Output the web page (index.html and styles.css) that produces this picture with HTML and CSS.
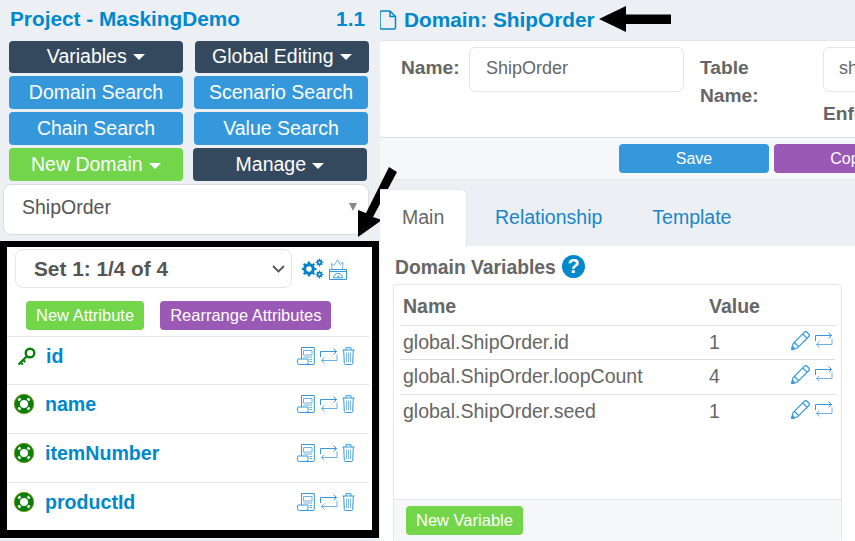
FILE: index.html
```html
<!DOCTYPE html>
<html lang="en">
<head>
<meta charset="utf-8">
<title>Domain: ShipOrder</title>
<link rel="stylesheet" href="styles.css">
</head>
<body>
<svg class="defs" width="0" height="0" aria-hidden="true">
  <defs>
    <symbol id="i-doc" viewBox="0 0 18 18"><path d="M4.500 12V.5h12.800v15.800a1.200 1.200 0 0 1-1.200 1.200H2.500a2 2 0 0 1-2-2V13a1 1 0 0 1 1-1h9.500v3.500a2 2 0 0 1-2 2" fill="none" stroke="#3498db"/><path d="M6.500 3.500h8.500v4.500H6.500zM6.500 10h8.500M12.500 12.500h2.500M12.500 14.500h2.500" fill="none" stroke="#6db1e4"/></symbol>
    <symbol id="i-loop" viewBox="0 0 18 16"><path d="M.5 9V3.500h16M13.500.7l3.200 2.800-3.200 2.800" fill="none" stroke="#3498db"/><path d="M17 6.500v6H1.500M4.500 9.700l-3.200 2.800 3.200 2.800" fill="none" stroke="#6db1e4"/></symbol>
    <symbol id="i-trash" viewBox="0 0 13 18"><path d="M.5 3h12M4 3V.7h5V3M1.700 3l.6 13.300a1.200 1.200 0 0 0 1.200 1.200h6a1.200 1.200 0 0 0 1.200-1.200L11.300 3" fill="none" stroke="#3498db"/><path d="M4.500 5.500v9.500M6.500 5.500v9.500M8.500 5.500v9.500" fill="none" stroke="#7dbbe8"/></symbol>
    <symbol id="i-pencil" viewBox="0 0 19 19"><path d="M13.500 1.200a1.800 1.800 0 0 1 2.500 0l1.800 1.800a1.800 1.800 0 0 1 0 2.500L6.500 16.800 2.600 18.400a1 1 0 0 1-1.800-1.300L2.200 12.500zM11.800 3l4.200 4.200M3.500 11.500l4 4" fill="none" stroke="#3498db" stroke-width="1.200"/><path d="M.8 18.300l2.300-2.300" stroke="#3498db" stroke-width="2"/></symbol>
    <symbol id="i-buoy" viewBox="0 0 20 20"><circle cx="10" cy="10" r="7" fill="none" stroke="#0a7d0a" stroke-width="6"/><path d="M6.200 6.200L4.600 4.600M13.800 6.200l1.600-1.600M6.200 13.800l-1.600 1.600M13.800 13.800l1.600 1.600" stroke="#fff" stroke-width="3"/><circle cx="10" cy="10" r="9.700" fill="none" stroke="#9aa81e" stroke-width=".6"/></symbol>
    <symbol id="i-key" viewBox="0 0 19 19"><circle cx="13" cy="6" r="4.300" fill="none" stroke="#0a7d0a" stroke-width="2.400"/><path d="M9.800 9.200L1.500 17.500M3.500 15.500l2.500 2M6 13l2.300 2" fill="none" stroke="#0a7d0a" stroke-width="2.200"/></symbol>
    <symbol id="i-gears" viewBox="0 0 22 21"><g fill="none" stroke="#0a82c8"><circle cx="7" cy="11" r="4.300" stroke-width="3.200"/><path d="M7 3.500v15M-.5 11h15M1.700 5.700l10.600 10.600M12.300 5.700L1.700 16.300" stroke-width="2.200" stroke-dasharray="2.400 10.200"/><circle cx="17.500" cy="4.500" r="1.900" stroke-width="1.800"/><path d="M17.500.6v7.800M13.600 4.500h7.800M14.800 1.800l5.400 5.400M20.200 1.800l-5.400 5.400" stroke-width="1.200" stroke-dasharray="1.300 5.200"/><circle cx="17.500" cy="16.500" r="1.900" stroke-width="1.800"/><path d="M17.500 12.600v7.800M13.600 16.500h7.800M14.800 13.800l5.400 5.400M20.200 13.800l-5.400 5.400" stroke-width="1.200" stroke-dasharray="1.300 5.200"/></g></symbol>
    <symbol id="i-gauge" viewBox="0 0 18 21"><path d="M3 10L2.500 4.500l2.500 2L8.500.8l2.500 4.700 3-2.500-.5 7" fill="none" stroke="#74b6e6"/><g fill="none" stroke="#3498db"><path d="M.5 10.500h17v10h-17zM.5 12.500h17"/><path d="M4.500 18.800a4.500 4.500 0 0 1 9 0zM9 18.800l.8-2.500"/></g></symbol>
    <symbol id="i-page" viewBox="0 0 18 20"><path d="M1 2.500A1.500 1.500 0 0 1 2.500 1H11l5.500 5.500V17.500A1.500 1.500 0 0 1 15 19H2.500A1.500 1.500 0 0 1 1 17.500zM11 1v5.500h5.500" fill="none" stroke="#0088cc" stroke-width="1.500"/></symbol>
  </defs>
</svg>

<div class="page">
  <aside class="side">
    <div class="title-row"><span>Project - MaskingDemo</span><span>1.1</span></div>
    <div class="btn-row row-a">
      <a class="btn dark">Variables <i class="caret"></i></a>
      <a class="btn dark">Global Editing <i class="caret"></i></a>
    </div>
    <div class="btn-row row-b">
      <a class="btn blue">Domain Search</a>
      <a class="btn blue">Scenario Search</a>
    </div>
    <div class="btn-row row-b">
      <a class="btn blue">Chain Search</a>
      <a class="btn blue">Value Search</a>
    </div>
    <div class="btn-row row-c">
      <a class="btn green">New Domain <i class="caret"></i></a>
      <a class="btn dark">Manage <i class="caret"></i></a>
    </div>
    <div class="picker"><span>ShipOrder</span><i class="picker-arrow"></i></div>

    <section class="attr-box">
      <div class="set-row">
        <div class="set-select"><span>Set 1: 1/4 of 4</span>
          <svg class="chev" width="13" height="8" viewBox="0 0 13 8"><path d="M1 1l5.500 5.500L12 1" fill="none" stroke="#555" stroke-width="1.800"/></svg>
        </div>
        <svg class="ico-gears"><use href="#i-gears"/></svg>
        <svg class="ico-gauge"><use href="#i-gauge"/></svg>
      </div>
      <div class="attr-actions">
        <a class="btn-sm green">New Attribute</a>
        <a class="btn-sm purple">Rearrange Attributes</a>
      </div>
      <ul class="attrs">
        <li class="attr"><svg class="ico-key"><use href="#i-key"/></svg><span class="attr-name">id</span><span class="attr-tools"><svg class="t-doc"><use href="#i-doc"/></svg><svg class="t-loop"><use href="#i-loop"/></svg><svg class="t-trash"><use href="#i-trash"/></svg></span></li>
        <li class="attr"><svg class="ico-buoy"><use href="#i-buoy"/></svg><span class="attr-name">name</span><span class="attr-tools"><svg class="t-doc"><use href="#i-doc"/></svg><svg class="t-loop"><use href="#i-loop"/></svg><svg class="t-trash"><use href="#i-trash"/></svg></span></li>
        <li class="attr"><svg class="ico-buoy"><use href="#i-buoy"/></svg><span class="attr-name">itemNumber</span><span class="attr-tools"><svg class="t-doc"><use href="#i-doc"/></svg><svg class="t-loop"><use href="#i-loop"/></svg><svg class="t-trash"><use href="#i-trash"/></svg></span></li>
        <li class="attr"><svg class="ico-buoy"><use href="#i-buoy"/></svg><span class="attr-name">productId</span><span class="attr-tools"><svg class="t-doc"><use href="#i-doc"/></svg><svg class="t-loop"><use href="#i-loop"/></svg><svg class="t-trash"><use href="#i-trash"/></svg></span></li>
      </ul>
    </section>
  </aside>

  <main class="main">
    <h1 class="domain-title"><svg class="ico-page"><use href="#i-page"/></svg><span>Domain: ShipOrder</span></h1>
    <div class="form-panel">
      <label class="lbl lbl-name">Name:</label>
      <div class="field field-name">ShipOrder</div>
      <label class="lbl lbl-table">Table Name:</label>
      <div class="col-table">
        <div class="field field-table">shiporder</div>
        <label class="lbl lbl-enf">Enforce</label>
      </div>
    </div>
    <div class="save-bar">
      <a class="btn-bar blue">Save</a>
      <a class="btn-bar purple">Copy</a>
    </div>
    <nav class="tabs">
      <a class="tab active">Main</a>
      <a class="tab first-link">Relationship</a>
      <a class="tab">Template</a>
    </nav>
    <div class="tab-body">
      <h2 class="vars-title">Domain Variables <span class="help">?</span></h2>
      <div class="vars-box">
        <div class="vars-scroll">
          <table class="vars">
            <thead><tr><th class="c-name">Name</th><th class="c-value">Value</th><th class="c-act"></th></tr></thead>
            <tbody>
              <tr><td>global.ShipOrder.id</td><td>1</td><td class="acts"><svg class="t-pencil"><use href="#i-pencil"/></svg><svg class="t-loop"><use href="#i-loop"/></svg></td></tr>
              <tr><td>global.ShipOrder.loopCount</td><td>4</td><td class="acts"><svg class="t-pencil"><use href="#i-pencil"/></svg><svg class="t-loop"><use href="#i-loop"/></svg></td></tr>
              <tr><td>global.ShipOrder.seed</td><td>1</td><td class="acts"><svg class="t-pencil"><use href="#i-pencil"/></svg><svg class="t-loop"><use href="#i-loop"/></svg></td></tr>
            </tbody>
          </table>
        </div>
        <div class="vars-foot"><a class="btn-sm green">New Variable</a></div>
      </div>
    </div>
  </main>

  <svg class="annot" width="855" height="541" viewBox="0 0 855 541" aria-hidden="true">
    <path d="M599 19L626 6V14.500H671V24H626V32z" fill="#000"/>
    <path d="M389 167L397 172 373 217 382 220 358 237 358 210 366 213z" fill="#000"/>
  </svg>
</div>
</body>
</html>
```
FILE: styles.css
```css
* { box-sizing: border-box; }
html, body { margin: 0; padding: 0; height: 100%; }
body {
  font-family: "Liberation Sans", Arial, sans-serif;
  background: #eceff4;
  color: #666;
  overflow: hidden;
}
a { text-decoration: none; }
.defs { position: absolute; }
.page { display: flex; width: 855px; height: 541px; overflow: hidden; position: relative; }
.annot { position: absolute; left: 0; top: 0; pointer-events: none; }

/* sidebar */
.side { width: 380px; flex: none; }
.title-row {
  display: flex; justify-content: space-between; align-items: center;
  height: 41px; padding: 0 15px 3px 10px;
  font-size: 20.800px; font-weight: 700; color: #0088cc;
}
.btn-row { display: flex; padding-left: 9px; }
.row-a { gap: 12px; height: 32px; }
.row-a .btn { padding-bottom: 2px; }
.row-b { gap: 11px; height: 33px; margin-top: 3px; }
.row-c { gap: 10px; height: 33px; margin-top: 3px; }
.btn {
  width: 174px; display: flex; align-items: center; justify-content: center;
  border-radius: 4px; color: #fff; font-size: 19.500px; white-space: pre;
}
.dark { background: #34495e; }
.blue { background: #3498db; }
.green { background: #72d54a; }
.purple { background: #9b59b6; }
.caret {
  display: inline-block; width: 0; height: 0; margin-left: 1px; margin-top: 2px;
  border-left: 6px solid transparent; border-right: 6px solid transparent; border-top: 6px solid #fff;
}
.picker {
  position: relative; display: flex; align-items: center;
  margin: 3px 0 0 3px; width: 366px; height: 51px; padding: 0 0 4px 18px;
  background: #fff; border: 1px solid #ddd; border-radius: 8px;
  font-size: 19.500px; color: #555;
}
.picker-arrow {
  position: absolute; right: 11px; top: 18px; width: 0; height: 0;
  border-left: 4px solid transparent; border-right: 4px solid transparent; border-top: 8px solid #888;
}
.attr-box {
  width: 379px; height: 297px; margin-top: 6px;
  background: #fff; border: solid #000; border-width: 6px 7px 8px 7px;
}
.set-row { display: flex; align-items: flex-start; padding: 2px 0 0 8px; }
.set-select {
  display: flex; align-items: center; justify-content: space-between;
  width: 277px; height: 39px; padding: 1px 6px 0 18px;
  border: 1px solid #e5e5e5; border-radius: 8px;
  font-size: 20.800px; font-weight: 700; color: #555;
}
.ico-gears { width: 22px; height: 21px; margin: 9px 0 0 10px; }
.ico-gauge { width: 18px; height: 21px; margin: 10px 0 0 5px; }
.attr-actions { display: flex; gap: 16px; padding-left: 19px; margin-top: 13px; }
.btn-sm {
  display: inline-flex; align-items: center; height: 29px; padding: 0 10px;
  border-radius: 4px; color: #fff; font-size: 16.500px;
}
.attrs { list-style: none; margin: 6px 0 0; padding: 0; }
.attr {
  display: flex; align-items: flex-start; height: 49px; padding: 7px 0 0 8px; width: 362px;
  border-top: 1px solid #e6e6e6;
}
.attr:first-child { height: 48px; }
.attr-name { font-size: 19.600px; font-weight: 700; color: #0088cc; line-height: 24px; }
.ico-key { width: 19px; height: 19px; margin: 3px 10px 0 2px; flex: none; }
.ico-buoy { width: 20px; height: 20px; margin: 2px 10px 0 -1px; flex: none; }
.ico-buoy + .attr-name { margin-left: 1px; }
.attr-tools { display: flex; align-items: flex-start; margin-left: auto; margin-right: 14px; gap: 4.500px; padding-top: 3px; }
.attr-tools .t-loop { margin-top: 1px; }
.t-doc { width: 18px; height: 18px; }
.t-loop { width: 18px; height: 16px; }
.t-trash { width: 13px; height: 18px; }
.t-pencil { width: 19px; height: 19px; }

/* main */
.main { width: 475px; flex: none; overflow: hidden; }
.domain-title {
  display: flex; align-items: center; gap: 7px; height: 40px; margin: 0; padding-bottom: 1px;
  font-size: 20.800px; font-weight: 700; color: #0088cc; 
}
.ico-page { width: 18px; height: 20px; margin-left: -1px; }
.form-panel {
  display: flex; align-items: flex-start; height: 98px; width: 475px; padding: 6px 0 0 21px;
  background: #fff; border-top: 1px solid #e3e6ea; border-bottom: 1px solid #ddd; border-radius: 4px 0 0 4px;
}
.lbl { font-size: 19.200px; font-weight: 700; color: #666; line-height: 28px; }
.lbl-name { width: 68px; flex: none; margin-top: 7px; }
.field {
  height: 45px; display: flex; align-items: center; padding: 0 0 3px 16px;
  border: 1px solid #e5e5e5; border-radius: 6px; background: #fff; font-size: 18px; color: #666;
}
.field-name { width: 215px; flex: none; }
.lbl-table { width: 123px; flex: none; margin: 7px 0 0 16px; padding-right: 60px; }
.col-table { flex: none; width: 200px; }
.field-table { width: 200px; padding-left: 15px; }
.lbl-enf { display: block; margin-top: 8px; }
.save-bar {
  display: flex; gap: 5px; height: 42px; padding: 6px 0 0 239px; width: 800px;
  background: #f6f7f9; border-bottom: 1px solid #e3e6ea;
}
.btn-bar {
  width: 150px; height: 29px; display: flex; align-items: center; justify-content: center;
  border-radius: 4px; color: #fff; font-size: 16px; flex: none;
}
.tabs { display: flex; height: 67px; padding-top: 9px; border-bottom: 1px solid #e3e6ea; position: relative; }
.tab {
  display: flex; align-items: center; height: 57px; padding: 0 25px;
  font-size: 19.500px; color: #1a86c8; white-space: nowrap;
}
.first-link { margin-left: 3px; }
.tab.active {
  width: 87px; padding: 0 0 2px 22px; height: 58px; color: #666; background: #fff;
  border-radius: 0 6px 0 0; border-top: 1px solid #e3e6ea; border-right: 1px solid #e3e6ea;
}
.tab-body { height: 295px; padding: 0 13px; background: #fff; margin-top: -1px; position: relative; }
.tabs .active { position: relative; z-index: 1; margin-bottom: -1px; }
.vars-title {
  display: flex; align-items: center; gap: 0; height: 38px; margin: 0; padding: 5px 0 0 2px;
  font-size: 19.300px; font-weight: 700; color: #666; white-space: pre;
}
.help {
  width: 23px; height: 23px; margin: -3px 0 0 1px; display: flex; align-items: center; justify-content: center;
  border-radius: 50%; background: #0088cc; color: #fff; font-size: 20px; font-weight: 700;
}
.vars-box { width: 449px; height: 258px; border: 1px solid #e5e5e5; border-radius: 4px; }
.vars-scroll { height: 214px; padding: 0 6px; }
.vars { width: 435px; border-collapse: collapse; table-layout: fixed; font-size: 19.500px; color: #666; }
.vars th { height: 40px; padding: 3px 0 0 3px; text-align: left; font-weight: 700; border-bottom: 1px solid #ddd; }
.vars td { height: 34px; padding: 0 0 0 3px; border-bottom: 1px solid #ddd; }
.vars tr + tr td { height: 35px; padding-bottom: 1px; }
.vars tr:last-child td { border-bottom: 0; }
.c-name { width: 306px; }
.c-value { width: 75px; }
.vars .acts { padding: 5px 0 0; vertical-align: top; white-space: nowrap; line-height: 0; }
.acts svg { vertical-align: top; }
.acts .t-pencil { margin: 0 5px 0 10px; }
.acts .t-loop { margin-top: 1px; }
.vars-foot {
  height: 42px; padding: 6px 0 0 12px; background: #f6f7f9; border-top: 1px solid #e5e5e5;
}
```
